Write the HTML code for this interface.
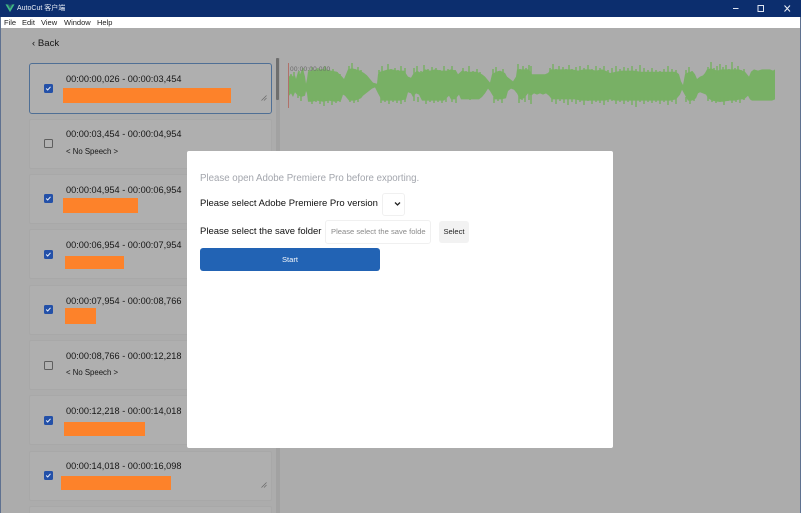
<!DOCTYPE html>
<html><head><meta charset="utf-8"><style>
html,body{margin:0;padding:0;width:801px;height:513px;overflow:hidden}
body{position:relative;background:#acacac;font-family:"Liberation Sans","Noto Sans CJK SC",sans-serif;color:#111}
div{position:absolute;box-sizing:border-box;white-space:nowrap}
.tb{left:0;top:0;width:801px;height:17px;background:#0c2e6e}
.mb{left:0;top:17px;width:801px;height:11px;background:#fff;font-size:7.5px;line-height:11px;color:#222}
.mb span{position:absolute;top:0}
.c{left:29px;width:243px;height:50px;background:#afafaf;border:1px solid #a8a8a8;border-radius:2px}
.t{left:66px;font-size:9.2px;line-height:12px;color:#161616}
.n{left:66px;font-size:7.8px;line-height:10px;color:#161616}
.o{background:#fd822a}
.cb{left:44px;width:8.5px;height:8.5px;border-radius:1.5px;background:#2350a8}
.cb svg{position:absolute;left:0;top:0}
.ub{left:44px;width:8.5px;height:8.5px;border-radius:1.5px;border:1px solid #5e5e5e;background:#b2b2b2}
</style></head><body>
<div class="tb"></div>
<svg style="position:absolute;left:5px;top:4px" width="10" height="9" viewBox="0 0 12 11"><path d="M0.500 0.500H3L6 5.500L9 0.500H11.500L6 10Z" fill="#3fb984"/><path d="M3 0.500H5L6 2.500L7 0.500H9L6 5.500Z" fill="#2f5f70"/></svg>
<div style="left:17px;top:3px;font-size:7px;line-height:11px;color:#e8edf5">AutoCut 客户端</div>
<svg style="position:absolute;left:730px;top:3px" width="70" height="11" viewBox="0 0 70 11"><path d="M3 5.500H8.500" stroke="#dfe6f2" stroke-width="1" fill="none"/><rect x="28" y="2.500" width="5.500" height="6" stroke="#dfe6f2" stroke-width="1" fill="none"/><path d="M54.500 2.500L60 8.500M60 2.500L54.500 8.500" stroke="#eef2f8" stroke-width="1" fill="none"/></svg>
<div class="mb"><span style="left:4px">File</span><span style="left:22px">Edit</span><span style="left:41px">View</span><span style="left:64px">Window</span><span style="left:97px">Help</span></div>
<div style="left:0;top:17px;width:1px;height:496px;background:#5f7190"></div>
<div style="left:800px;top:17px;width:1px;height:496px;background:#5f7190"></div>

<div style="left:32px;top:38px;font-size:9.6px;line-height:12px;color:#161616">‹ Back</div>

<div class="c" style="top:63px;height:51px;border:1px solid #4f6f95;border-radius:3px"></div>
<div class="c" style="top:119px"></div>
<div class="c" style="top:174px"></div>
<div class="c" style="top:229px"></div>
<div class="c" style="top:285px"></div>
<div class="c" style="top:340px"></div>
<div class="c" style="top:395px"></div>
<div class="c" style="top:451px"></div>
<div class="c" style="top:506px;height:7px;border-radius:2px 2px 0 0;border-bottom:0"></div>

<div class="t" style="top:73px">00:00:00,026 - 00:00:03,454</div>
<div class="t" style="top:128px">00:00:03,454 - 00:00:04,954</div>
<div class="t" style="top:184px">00:00:04,954 - 00:00:06,954</div>
<div class="t" style="top:239px">00:00:06,954 - 00:00:07,954</div>
<div class="t" style="top:295px">00:00:07,954 - 00:00:08,766</div>
<div class="t" style="top:350px">00:00:08,766 - 00:00:12,218</div>
<div class="t" style="top:405px">00:00:12,218 - 00:00:14,018</div>
<div class="t" style="top:460px">00:00:14,018 - 00:00:16,098</div>

<div class="n" style="top:147px">&lt; No Speech &gt;</div>
<div class="n" style="top:368px">&lt; No Speech &gt;</div>

<div class="o" style="left:63px;top:88px;width:168px;height:15px"></div>
<div class="o" style="left:63px;top:198px;width:75px;height:15px"></div>
<div class="o" style="left:65px;top:256px;width:59px;height:13px"></div>
<div class="o" style="left:65px;top:308px;width:31px;height:16px"></div>
<div class="o" style="left:64px;top:422px;width:81px;height:14px"></div>
<div class="o" style="left:61px;top:476px;width:110px;height:14px"></div>

<div class="cb" style="top:84px"><svg width="9" height="9"><path d="M2.200 4.500L3.700 6L6.500 2.800" stroke="#e8eefa" stroke-width="1" fill="none"/></svg></div>
<div class="ub" style="top:139px"></div>
<div class="cb" style="top:194px"><svg width="9" height="9"><path d="M2.200 4.500L3.700 6L6.500 2.800" stroke="#e8eefa" stroke-width="1" fill="none"/></svg></div>
<div class="cb" style="top:250px"><svg width="9" height="9"><path d="M2.200 4.500L3.700 6L6.500 2.800" stroke="#e8eefa" stroke-width="1" fill="none"/></svg></div>
<div class="cb" style="top:305px"><svg width="9" height="9"><path d="M2.200 4.500L3.700 6L6.500 2.800" stroke="#e8eefa" stroke-width="1" fill="none"/></svg></div>
<div class="ub" style="top:361px"></div>
<div class="cb" style="top:416px"><svg width="9" height="9"><path d="M2.200 4.500L3.700 6L6.500 2.800" stroke="#e8eefa" stroke-width="1" fill="none"/></svg></div>
<div class="cb" style="top:471px"><svg width="9" height="9"><path d="M2.200 4.500L3.700 6L6.500 2.800" stroke="#e8eefa" stroke-width="1" fill="none"/></svg></div>

<svg style="position:absolute;left:261px;top:95px" width="6" height="6"><path d="M0.500 5.500L5.500 0.500M3 5.500L5.500 3" stroke="#666" stroke-width=".7"/></svg>
<svg style="position:absolute;left:261px;top:482px" width="6" height="6"><path d="M0.500 5.500L5.500 0.500M3 5.500L5.500 3" stroke="#666" stroke-width=".7"/></svg>

<div style="left:276px;top:58px;width:4px;height:455px;background:#a2a2a2"></div>
<div style="left:276px;top:58px;width:3px;height:42px;background:#6e6e6e;border-radius:1px"></div>

<svg style="position:absolute;left:0;top:0" width="801" height="513">
<polygon transform="translate(0 85) scale(1 1.2) translate(0 -85)" fill="#78b065" points="289,78 291,76 293,78 295,77 296,80 298,74 300,76 302,72 304,75 305,78 306,84 307,80 308,74 312,73 316,72 321,72 326,72 331,73 337,74 342,78 344,80 346,76 348,72 352,71 356,72 360,73 364,75 367,77 370,80 373,83 377,84 378,76 380,74 384,73 388,72 392,72 398,73 404,73 408,78 411,79 413,76 417,73 421,75 425,72 430,73 435,72 441,73 447,73 451,72 456,73 458,76 462,73 466,74 471,74 477,74 482,76 485,78 488,81 490,83 492,76 496,74 500,73 505,75 507,78 510,80 513,82 516,78 517,72 521,72 525,72 529,72 532,76 538,76 545,76 548,75 551,72 555,72 560,72 566,72 572,72 578,73 584,72 590,72 596,73 602,72 608,74 610,75 616,74 622,73 628,73 634,73 640,74 646,74 652,74 658,74 664,74 670,74 676,74 679,76 681,82 683,85 685,76 689,74 693,74 695,76 697,80 700,78 703,77 705,75 707,72 711,71 717,73 722,72 727,72 733,72 739,72 745,74 749,78 751,74 754,72 758,73 762,72 766,72 770,72 773,73 775,72 775,97 772,98 768,98 764,98 760,98 756,98 752,98 750,97 748,94 744,97 740,97 735,98 729,98 723,99 718,99 712,98 708,96 706,93 703,92 700,91 698,92 696,96 692,98 688,98 684,92 682,89 680,93 676,97 670,98 664,98 657,98 651,98 645,98 639,98 633,98 627,98 621,98 615,98 610,97 605,98 599,98 593,98 587,98 581,98 575,97 569,97 563,97 557,97 552,97 549,94 546,92 543,93 540,92 537,93 534,92 531,94 528,92 524,96 520,97 517,92 514,89 511,88 508,90 506,96 501,97 495,97 490,90 488,88 485,92 482,95 479,97 473,97 467,97 461,97 459,93 455,97 451,97 449,94 444,98 438,98 432,98 426,98 422,98 419,93 416,92 413,95 411,92 408,91 406,97 400,98 394,98 388,98 382,98 378,92 375,87 372,88 369,90 366,92 363,94 361,96 355,98 349,98 345,94 343,93 341,98 335,99 329,98 323,99 317,98 312,99 308,99 307,92 306,90 305,94 301,95 297,93 295,91 293,95 291,92 289,94"/>
<path fill="none" stroke="#78b065" stroke-width="1.500" d="M291 74V78M294 72V78M299 71V76M303 68V74M301 101V95M298 98V94M309 70V76M312 67V74M315 72V76M318 68V74M322 69V74M325 66V73M329 70V74M333 69V74M337 72V76M340 74V78M349 66V74M352 63V72M355 69V74M358 67V73M361 70V75M379 70V76M382 66V74M385 71V75M388 64V73M391 69V74M395 68V74M398 70V75M401 66V73M405 68V74M414 68V75M417 66V74M421 71V76M424 65V73M428 69V74M432 67V74M436 68V73M440 70V75M444 66V74M448 69V74M452 66V74M455 70V75M463 68V74M466 71V75M469 66V74M473 71V75M477 69V75M480 72V76M493 69V76M496 67V75M499 71V75M503 69V75M518 64V73M520 69V74M523 66V73M526 68V74M529 65V73M531 66V76M550 68V74M553 64V73M556 69V74M559 66V73M563 67V74M566 69V74M569 65V73M572 69V74M576 67V74M580 66V73M584 68V74M588 65V73M592 69V74M596 66V74M600 68V74M604 66V74M608 70V75M612 68V75M616 66V75M620 69V75M624 67V75M628 68V75M632 66V75M636 69V75M640 65V75M644 68V75M648 70V75M652 68V75M656 70V75M660 71V75M664 69V75M668 66V75M672 69V75M676 70V75M686 70V76M689 67V75M692 71V76M708 67V73M711 62V72M714 68V74M717 66V74M720 64V73M723 67V74M726 65V73M729 69V74M732 62V73M735 68V74M738 66V74M741 70V75M744 69V75M312 98V104M316 98V102M320 98V104M324 98V106M328 98V103M332 98V105M336 98V103M340 98V102M350 98V102M354 98V103M358 98V102M381 97V103M385 97V102M389 98V104M393 98V102M397 98V103M401 98V104M405 97V102M414 95V101M418 97V102M426 97V104M430 98V102M434 98V103M438 98V102M442 98V103M446 98V102M452 97V102M456 97V103M466 96V99M470 96V100M474 96V99M494 97V103M498 97V101M502 97V103M519 92V103M522 92V100M525 92V102M529 92V100M531 92V104M552 97V102M556 97V104M560 97V101M564 97V103M568 97V105M572 97V102M576 97V104M580 97V102M584 97V105M588 97V101M592 97V104M596 97V102M600 97V103M604 97V105M608 97V102M612 97V101M616 97V104M620 97V102M624 97V104M628 97V102M632 97V105M636 97V107M640 97V102M644 97V104M648 97V102M652 97V103M656 97V102M660 97V104M664 97V102M668 97V105M672 97V102M676 97V104M686 97V102M690 97V104M694 97V101M708 97V101M712 97V102M716 97V103M720 97V102M724 97V105M728 97V101M732 97V103M736 97V102M740 97V103M744 96V100"/>
<line x1="288.500" y1="63" x2="288.500" y2="108" stroke="#b0716a" stroke-width="1"/>
<text x="290" y="71" font-family="Liberation Sans" font-size="6.500" fill="#6a6a6a" letter-spacing=".2">00:00:00.000</text>
</svg>

<div style="left:187px;top:151px;width:426px;height:297px;background:#fff;border-radius:2px"></div>
<div style="left:200px;top:173px;font-size:9.7px;line-height:12px;color:#a3a6ad">Please open Adobe Premiere Pro before exporting.</div>
<div style="left:200px;top:198px;font-size:9.5px;line-height:12px;color:#111">Please select Adobe Premiere Pro version</div>
<div style="left:382px;top:193px;width:23px;height:23px;border:1px solid #f0f0f0;border-radius:3px"></div>
<svg style="position:absolute;left:394px;top:201px" width="8" height="6"><path d="M1 1.500L3.500 4L6 1.500" stroke="#222" stroke-width="1.300" fill="none"/></svg>
<div style="left:200px;top:226px;font-size:9.5px;line-height:12px;color:#111">Please select the save folder</div>
<div style="left:325px;top:220px;width:106px;height:24px;border:1px solid #f0f0f0;border-radius:3px"></div>
<div style="left:331px;top:226px;width:95px;overflow:hidden;font-size:7.6px;line-height:12px;color:#8a8a8a">Please select the save folder</div>
<div style="left:439px;top:221px;width:30px;height:22px;background:#f2f2f2;border-radius:3px;font-size:7.6px;line-height:22px;text-align:center;color:#222">Select</div>
<div style="left:200px;top:248px;width:180px;height:23px;background:#2263b4;border-radius:3px;font-size:7.6px;line-height:23px;text-align:center;color:#f4f7fb">Start</div>
</body></html>
